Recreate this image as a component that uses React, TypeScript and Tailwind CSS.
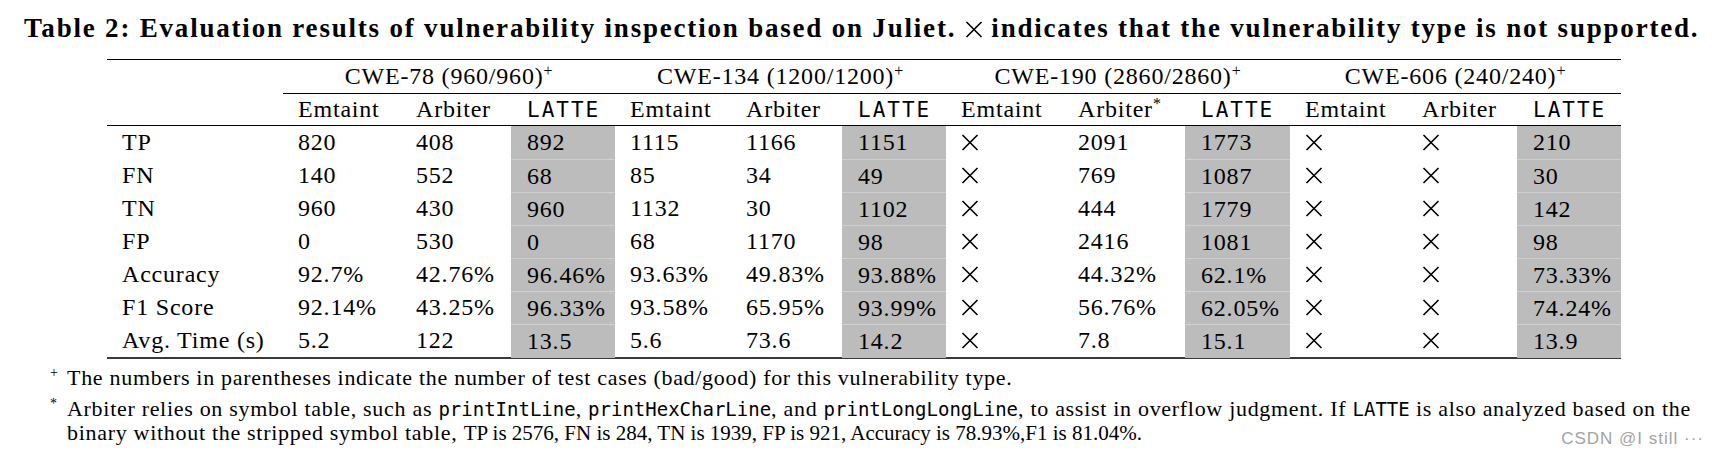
const serif = "font-['Liberation_Serif','Times_New_Roman',serif]";
const mono = "font-['DejaVu_Sans_Mono',monospace]";

const colWidths =
  "grid-cols-[176px_118px_110px_104px_116px_111px_104px_117px_122px_105px_117px_110px_104px]";

const shaded = [3, 6, 9, 12];

const rows: string[][] = [
  ["TP", "820", "408", "892", "1115", "1166", "1151", "X", "2091", "1773", "X", "X", "210"],
  ["FN", "140", "552", "68", "85", "34", "49", "X", "769", "1087", "X", "X", "30"],
  ["TN", "960", "430", "960", "1132", "30", "1102", "X", "444", "1779", "X", "X", "142"],
  ["FP", "0", "530", "0", "68", "1170", "98", "X", "2416", "1081", "X", "X", "98"],
  ["Accuracy", "92.7%", "42.76%", "96.46%", "93.63%", "49.83%", "93.88%", "X", "44.32%", "62.1%", "X", "X", "73.33%"],
  ["F1 Score", "92.14%", "43.25%", "96.33%", "93.58%", "65.95%", "93.99%", "X", "56.76%", "62.05%", "X", "X", "74.24%"],
  ["Avg. Time (s)", "5.2", "122", "13.5", "5.6", "73.6", "14.2", "X", "7.8", "15.1", "X", "X", "13.9"],
];

const groups = [
  "CWE-78 (960/960)",
  "CWE-134 (1200/1200)",
  "CWE-190 (2860/2860)",
  "CWE-606 (240/240)",
];

function Cross({ className = "" }: { className?: string }) {
  return (
    <svg width="18" height="17" viewBox="0 0 18 17" className={className}>
      <path d="M1.5 1 L16.5 16 M16.5 1 L1.5 16" stroke="#000" strokeWidth="1.6" fill="none" />
    </svg>
  );
}

function Latte({ className = "" }: { className?: string }) {
  return <span className={`${mono} ${className}`}>LATTE</span>;
}

function Code({ children }: { children: string }) {
  return <span className={`${mono} text-[19px] tracking-normal`}>{children}</span>;
}

export default function App() {
  return (
    <div className={`relative h-[458px] w-[1718px] overflow-hidden bg-white text-black ${serif}`}>
      {/* caption */}
      <div className="pl-[24px] pt-[12px] text-[27px] font-bold leading-[32px] tracking-[1.8px] whitespace-nowrap">
        Table 2: Evaluation results of vulnerability inspection based on Juliet.{" "}
        <Cross className="inline-block align-[-1px]" /> indicates that the vulnerability type is not
        supported.
      </div>

      <div className="ml-[107px] mt-[15px] w-[1514px] text-[24px] tracking-[0.8px]">
        <div className="h-px bg-black" />

        {/* group header */}
        <div className={`grid ${colWidths} h-[33px] items-center leading-[33px]`}>
          <div />
          {groups.map((g) => (
            <div key={g} className="col-span-3 text-center">
              {g}
              <sup className="text-[16px]">+</sup>
            </div>
          ))}
        </div>
        <div className="ml-[176px] h-px bg-black" />

        {/* sub header */}
        <div className={`grid ${colWidths} h-[31px] leading-[31px]`}>
          <div />
          {[0, 1, 2, 3].map((i) => (
            <div key={i} className="contents">
              <div className="pl-[15px]">Emtaint</div>
              <div className="pl-[15px]">
                Arbiter
                {i === 2 && <sup className="text-[16px]">*</sup>}
              </div>
              <div className="pl-[16px]">
                <Latte className="text-[21px] tracking-[2px]" />
              </div>
            </div>
          ))}
        </div>
        <div className="h-px bg-black" />

        {/* body */}
        {rows.map((r, ri) => (
          <div key={r[0]} className={`grid ${colWidths} h-[33px] leading-[33px]`}>
            {r.map((v, ci) => {
              const isShaded = shaded.includes(ci);
              return (
                <div
                  key={ci}
                  className={`${isShaded ? "pl-[16px] bg-[#bcbcbc]" : "pl-[15px]"} ${
                    isShaded && ri > 0 ? "border-t border-[#cfcfcf]" : ""
                  } whitespace-nowrap`}
                >
                  {v === "X" ? <Cross className="mt-[8px]" /> : v}
                </div>
              );
            })}
          </div>
        ))}
        <div className="h-[2px] bg-[#3a3a3a]" />
      </div>

      {/* footnotes */}
      <div className="mt-[7px] pl-[50px] text-[22px] leading-[24px] tracking-[0.7px]">
        <div className="flex">
          <span className="w-[17px] shrink-0 text-[14px] leading-[14px]">+</span>
          <span>
            The numbers in parentheses indicate the number of test cases (bad/good) for this vulnerability
            type.
          </span>
        </div>
        <div className="mt-[7px] flex">
          <span className="w-[17px] shrink-0 text-[14px] leading-[14px]">*</span>
          <span className="whitespace-nowrap">
            Arbiter relies on symbol table, such as <Code>printIntLine</Code>, <Code>printHexCharLine</Code>,
            and <Code>printLongLongLine</Code>, to assist in overflow judgment. If <Code>LATTE</Code> is also
            analyzed based on the
            <br />
            binary without the stripped symbol table,{" "}
            <span className="text-[21px] tracking-normal">
              TP is 2576, FN is 284, TN is 1939, FP is 921, Accuracy is 78.93%,F1 is 81.04%.
            </span>
          </span>
        </div>
      </div>

      <div className="absolute bottom-[7px] right-[14px] font-['Liberation_Sans',sans-serif] text-[17px] tracking-[1px] text-[#a3a3a3]">
        CSDN @I still ···
      </div>
    </div>
  );
}
